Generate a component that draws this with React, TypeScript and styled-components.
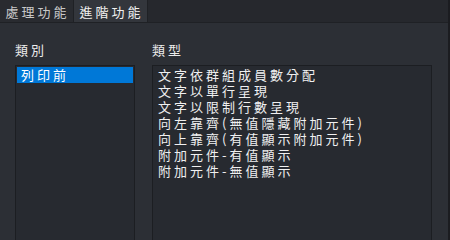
import styled, { createGlobalStyle } from "styled-components";

const GlobalStyle = createGlobalStyle`
  html, body {
    margin: 0;
    padding: 0;
    background: #2c2f35;
  }
  body {
    font-family: "Noto Sans CJK TC", "Noto Sans CJK SC", sans-serif;
    color: #e6e6e6;
  }
`;

const Window = styled.div`
  width: 450px;
  height: 240px;
  display: flex;
  flex-direction: column;
  overflow: hidden;
  background: #2c2f35;
  border-right: 2px solid #1b1c20;
  box-sizing: border-box;
`;

const TabBar = styled.div`
  height: 22px;
  display: flex;
  background: #26282d;
  border-bottom: 1px solid #1f2125;
  flex-shrink: 0;
`;

const Tab = styled.div<{ $active?: boolean }>`
  width: 74px;
  display: flex;
  align-items: center;
  justify-content: center;
  font-size: 13px;
  letter-spacing: 3px;
  padding-left: 2px;
  box-sizing: border-box;
  color: ${(p) => (p.$active ? "#f0f0f0" : "#c8c8c8")};
  background: ${(p) => (p.$active ? "#33363c" : "#292b30")};
  border-right: 1px solid #1f2125;
`;

const Body = styled.div`
  flex: 1;
  display: grid;
  grid-template-columns: 120px 280px;
  column-gap: 17px;
  padding: 14px 0 0 15px;
`;

const Column = styled.div`
  display: flex;
  flex-direction: column;
  min-height: 0;
`;

const Label = styled.div`
  font-size: 13px;
  letter-spacing: 3px;
  height: 28px;
  line-height: 14px;
  padding-top: 6px;
  box-sizing: border-box;
  color: #ececec;
`;

const ListBox = styled.div`
  flex: 1;
  background: #272a30;
  border: 1px solid #1c1e22;
  border-bottom: none;
  padding: 1px;
`;

const Item = styled.div<{ $selected?: boolean }>`
  height: 16px;
  line-height: 16px;
  font-size: 13px;
  letter-spacing: 3px;
  padding-left: 4px;
  white-space: nowrap;
  background: ${(p) => (p.$selected ? "#0078d7" : "transparent")};
  color: ${(p) => (p.$selected ? "#ffffff" : "#f0f0f0")};
`;

const categories = ["列印前"];

const types = [
  "文字依群組成員數分配",
  "文字以單行呈現",
  "文字以限制行數呈現",
  "向左靠齊(無值隱藏附加元件)",
  "向上靠齊(有值顯示附加元件)",
  "附加元件-有值顯示",
  "附加元件-無值顯示",
];

export default function App() {
  return (
    <>
      <GlobalStyle />
      <Window>
        <TabBar>
          <Tab>處理功能</Tab>
          <Tab $active>進階功能</Tab>
        </TabBar>
        <Body>
          <Column>
            <Label>類別</Label>
            <ListBox>
              {categories.map((c, i) => (
                <Item key={c} $selected={i === 0}>
                  {c}
                </Item>
              ))}
            </ListBox>
          </Column>
          <Column>
            <Label>類型</Label>
            <ListBox>
              {types.map((t) => (
                <Item key={t}>{t}</Item>
              ))}
            </ListBox>
          </Column>
        </Body>
      </Window>
    </>
  );
}
